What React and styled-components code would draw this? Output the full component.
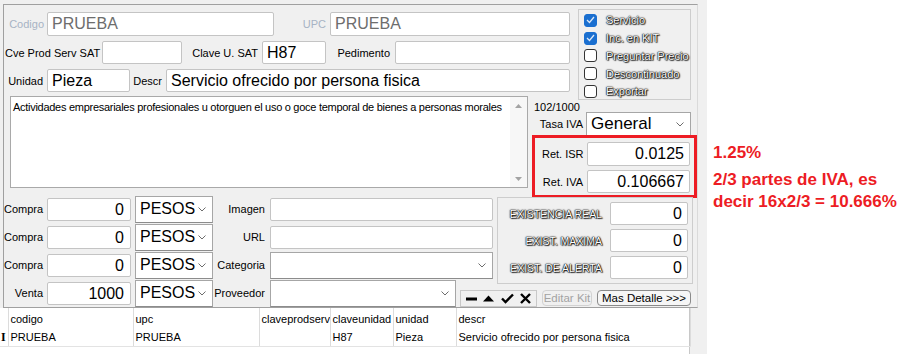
import React from 'react';
import styled, { createGlobalStyle } from 'styled-components';

const GlobalStyle = createGlobalStyle`
  html, body { margin: 0; padding: 0; background: #fff; }
  body {
    font-family: "Liberation Sans", Arial, sans-serif;
    font-size: 11px;
    color: #000;
  }
  * { box-sizing: border-box; }
`;

const Page = styled.div`
  display: flex;
  width: 910px;
  height: 354px;
  overflow: hidden;
`;

const Window = styled.div`
  width: 707px;
  height: 354px;
  background: #f0f0f0;
  padding-top: 4px;
  display: flex;
  flex-direction: column;
`;

const Frame = styled.div`
  margin-left: 3px;
  width: 695px;
  height: 304px;
  border: 1px solid #a0a0a0;
  border-right-color: #dadada;
  display: flex;
  flex-direction: column;
`;

const TopRow = styled.div`
  display: flex;
  align-items: flex-start;
`;

const FieldsCol = styled.div`
  margin-top: 7px;
  display: flex;
  flex-direction: column;
  gap: 5px;
`;

const FormRow = styled.div`
  display: flex;
  align-items: center;
  height: ${p => p.$h}px;
`;

const Label = styled.div`
  flex: none;
  width: ${p => p.$w}px;
  text-align: ${p => p.$align || 'right'};
  padding-right: ${p => p.$pr ?? 4}px;
  padding-left: ${p => p.$pl ?? 0}px;
  color: ${p => (p.$muted ? '#a7b3c4' : '#000')};
  white-space: nowrap;
  align-self: center;
  grid-column: ${p => p.$gc || 'auto'};
  grid-row: ${p => p.$gr || 'auto'};
`;

const TextBox = styled.div`
  flex: none;
  width: ${p => p.$w}px;
  height: ${p => p.$h || 23}px;
  background: #fff;
  border: 1px solid #c4c4c4;
  border-radius: 2px;
  font-size: ${p => p.$size || 16}px;
  line-height: ${p => (p.$h || 23) - 2}px;
  color: ${p => (p.$muted ? '#6d6d6d' : '#000')};
  text-align: ${p => p.$align || 'left'};
  padding: 0 ${p => p.$pr ?? 4}px 0 4px;
  white-space: nowrap;
  overflow: hidden;
  align-self: center;
  grid-column: ${p => p.$gc || 'auto'};
  grid-row: ${p => p.$gr || 'auto'};
`;

const SelectBox = styled.div`
  flex: none;
  width: ${p => p.$w}px;
  height: ${p => p.$h || 27}px;
  margin-left: ${p => p.$ml || 0}px;
  background: #fff;
  border: 1px solid #a6a6a6;
  border-bottom-color: #8c8c8c;
  display: flex;
  align-items: center;
  justify-content: space-between;
  padding: 0 6px 0 4px;
  font-size: ${p => p.$size || 16}px;
  align-self: center;
  grid-column: ${p => p.$gc || 'auto'};
  grid-row: ${p => p.$gr || 'auto'};
`;

const CheckGroup = styled.div`
  margin-top: 4px;
  margin-left: 8px;
  width: 113px;
  height: 91px;
  border: 1px solid #cdcdcd;
  padding: 1.5px 0 0 5px;
`;

const CheckItem = styled.div`
  display: flex;
  align-items: center;
  height: 17.75px;
  gap: 9px;
`;

const Box = styled.div`
  width: 13px;
  height: 13px;
  border-radius: 3px;
  border: 1px solid ${p => (p.$on ? '#1a6fd0' : '#333')};
  background: ${p => (p.$on ? '#1a6fd0' : '#fff')};
  display: flex;
  align-items: center;
  justify-content: center;
`;

const Embossed = styled.span`
  color: #fff;
  font-size: ${p => p.$size || 11}px;
  white-space: nowrap;
  text-shadow: 0 0 1px #000, 0 0 1px #000, 0 0 2px #000, 1px 1px 1px #333;
`;

const MidRow = styled.div`
  display: flex;
  align-items: flex-start;
  margin-top: -4px;
  padding-left: 6px;
`;

const Memo = styled.div`
  width: 518px;
  height: 92px;
  background: #fff;
  border: 1px solid #a9a9a9;
  display: flex;
`;

const MemoText = styled.div`
  flex: 1;
  padding: 3px 2px;
  line-height: 14px;
  letter-spacing: -0.28px;
  white-space: nowrap;
  overflow: hidden;
`;

const ScrollBar = styled.div`
  width: 17px;
  background: #f7f7f7;
  display: flex;
  flex-direction: column;
  justify-content: space-between;
  align-items: center;
  padding: 7px 0 6px;
`;

const IvaBlock = styled.div`
  margin-left: 4px;
  width: 165px;
  display: flex;
  flex-direction: column;
`;

const Counter = styled.div`
  height: 16px;
  padding: 5px 0 0 2px;
  line-height: 12px;
`;

const RedBox = styled.div`
  margin-top: -1px;
  height: 63px;
  border: 3px solid #ed1c24;
  padding: 4px 0 0 7px;
  display: flex;
  flex-direction: column;
  gap: 4px;
`;

const BottomGrid = styled.div`
  margin-top: -3px;
  display: grid;
  grid-template-columns: 43px 84px 82px 57px 223px 4px 196px;
  grid-template-rows: repeat(4, 28px);
`;

const StockGroup = styled.div`
  grid-column: 7;
  grid-row: 1 / span 3;
  align-self: start;
  margin-top: 2px;
  height: 87px;
  border: 1px solid #cdcdcd;
  padding: 4px 4px 0 0;
  display: flex;
  flex-direction: column;
  gap: 4px;
`;

const StockRow = styled.div`
  display: flex;
  justify-content: flex-end;
  align-items: center;
  height: 23px;
  gap: 8px;
`;

const LastRow = styled.div`
  grid-column: 5 / span 3;
  grid-row: 4;
  display: flex;
  align-items: flex-end;
`;

const Toolbar = styled.div`
  margin-left: 4px;
  width: 77px;
  height: 17px;
  border: 1px solid #c8c8c8;
  display: flex;
  align-items: center;
  justify-content: space-around;
  padding: 0 2px;
`;

const Button = styled.div`
  margin-left: 5px;
  margin-bottom: 1px;
  width: ${p => p.$w}px;
  height: 16px;
  border: 1px solid ${p => (p.$disabled ? '#d2d2d2' : '#8a8a8a')};
  border-radius: 4px;
  background: ${p => (p.$disabled ? '#f0f0f0' : '#f6f6f6')};
  color: ${p => (p.$disabled ? '#a3a3a3' : '#000')};
  font-size: 11.5px;
  line-height: 14px;
  text-align: center;
  white-space: nowrap;
`;

const DataGrid = styled.div`
  width: 690px;
  flex: 1;
  background: #fff;
  border-right: 1px solid #c8c8c8;
`;

const Table = styled.table`
  border-collapse: collapse;
  table-layout: fixed;
  width: 690px;
`;

const Cell = styled.td`
  padding: 0 2px;
  height: ${p => p.$h}px;
  white-space: nowrap;
  overflow: hidden;
  border-right: 1px solid #dcdcdc;
  border-bottom: ${p => (p.$last ? '1px solid #e3e3e3' : 'none')};
  font-size: 11px;
  vertical-align: middle;
`;

const Cursor = styled.span`
  font-family: "Liberation Serif", serif;
  font-weight: bold;
  font-size: 12px;
  margin-left: -1px;
`;

const Notes = styled.div`
  flex: 1;
  background: #fff;
  padding: 142px 0 0 6px;
  color: #ed1c24;
  font-weight: bold;
  font-size: 17px;
  line-height: 22px;
`;

const NoteLine = styled.div`
  white-space: nowrap;
  margin-top: ${p => p.$mt || 0}px;
`;

const Chevron = () => (
  <svg width="8" height="5" viewBox="0 0 8 5">
    <polyline points="0.5,0.5 4,4 7.5,0.5" fill="none" stroke="#6d6d6d" strokeWidth="1" />
  </svg>
);

const Select = ({ children, ...rest }) => (
  <SelectBox {...rest}>
    <span>{children}</span>
    <Chevron />
  </SelectBox>
);

const Tick = () => (
  <svg width="9" height="8" viewBox="0 0 9 8">
    <polyline points="1,4 3.5,6.5 8,1" fill="none" stroke="#dce9f8" strokeWidth="1.3" />
  </svg>
);

const Arrow = ({ down }) => (
  <svg width="7" height="4" viewBox="0 0 7 4">
    <polygon points={down ? '0,0 7,0 3.5,4' : '0,4 7,4 3.5,0'} fill="#a3a3a3" />
  </svg>
);

const checks = [
  ['Servicio', true],
  ['Inc. en KIT', true],
  ['Preguntar Precio', false],
  ['Descontinuado', false],
  ['Exportar', false],
];

const prices = [
  ['Compra', '0', 'Imagen'],
  ['Compra', '0', 'URL'],
  ['Compra', '0', 'Categoria'],
  ['Venta', '1000', 'Proveedor'],
];

const stock = ['EXISTENCIA REAL', 'EXIST. MAXIMA', 'EXIST. DE ALERTA'];

const cols = [8, 125, 126, 71, 63, 63, 234];
const header = ['', 'codigo', 'upc', 'claveprodserv', 'claveunidad', 'unidad', 'descr'];
const row = ['', 'PRUEBA', 'PRUEBA', '', 'H87', 'Pieza', 'Servicio ofrecido por persona fisica'];

export default function App() {
  return (
    <Page>
      <GlobalStyle />
      <Window>
        <Frame>
          <TopRow>
            <FieldsCol>
              <FormRow $h={24}>
                <Label $w={43} $pr={3} $muted>Codigo</Label>
                <TextBox $w={227} $h={24} $muted>PRUEBA</TextBox>
                <Label $w={56} $muted>UPC</Label>
                <TextBox $w={240} $h={24} $muted>PRUEBA</TextBox>
              </FormRow>
              <FormRow $h={23}>
                <Label $w={98} $align="left" $pl={1} $pr={0}>Cve Prod Serv SAT</Label>
                <TextBox $w={80} />
                <Label $w={80}>Clave U. SAT</Label>
                <TextBox $w={64}>H87</TextBox>
                <Label $w={69} $pr={5}>Pedimento</Label>
                <TextBox $w={175} />
              </FormRow>
              <FormRow $h={23}>
                <Label $w={43}>Unidad</Label>
                <TextBox $w={83}>Pieza</TextBox>
                <Label $w={36}>Descr</Label>
                <TextBox $w={404}>Servicio ofrecido por persona fisica</TextBox>
              </FormRow>
            </FieldsCol>
            <CheckGroup>
              {checks.map(([text, on]) => (
                <CheckItem key={text}>
                  <Box $on={on}>{on && <Tick />}</Box>
                  <Embossed>{text}</Embossed>
                </CheckItem>
              ))}
            </CheckGroup>
          </TopRow>

          <MidRow>
            <Memo>
              <MemoText>
                Actividades empresariales profesionales u otorguen el uso o goce temporal de bienes a personas morales
              </MemoText>
              <ScrollBar>
                <Arrow />
                <Arrow down />
              </ScrollBar>
            </Memo>
            <IvaBlock>
              <Counter>102/1000</Counter>
              <FormRow $h={24}>
                <Label $w={54} $pr={3}>Tasa IVA</Label>
                <Select $w={105} $h={24} $size={17}>General</Select>
              </FormRow>
              <RedBox>
                <FormRow $h={24}>
                  <Label $w={45}>Ret. ISR</Label>
                  <TextBox $w={103} $h={24} $align="right" $pr={5}>0.0125</TextBox>
                </FormRow>
                <FormRow $h={23}>
                  <Label $w={45}>Ret. IVA</Label>
                  <TextBox $w={103} $align="right" $pr={5}>0.106667</TextBox>
                </FormRow>
              </RedBox>
            </IvaBlock>
          </MidRow>

          <BottomGrid>
            {prices.map(([name, value, extra], i) => {
              const r = i + 1;
              return (
                <React.Fragment key={i}>
                  <Label $w={43} $gc={1} $gr={r}>{name}</Label>
                  <TextBox $w={84} $gc={2} $gr={r} $align="right" $pr={6}>{value}</TextBox>
                  <Select $w={78} $ml={4} $gc={3} $gr={r}>PESOS</Select>
                  <Label $w={57} $pr={5} $gc={4} $gr={r}>{extra}</Label>
                  {i < 2 && <TextBox $w={223} $gc={5} $gr={r} />}
                  {i === 2 && <Select $w={223} $gc={5} $gr={r} />}
                </React.Fragment>
              );
            })}
            <LastRow>
              <Select $w={186} />
              <Toolbar>
                <svg width="11" height="4" viewBox="0 0 11 4"><rect width="11" height="3" y="0.5" fill="#000" /></svg>
                <svg width="11" height="7" viewBox="0 0 11 7"><polygon points="0,6.5 11,6.5 5.5,0.5" fill="#000" /></svg>
                <svg width="13" height="11" viewBox="0 0 13 11"><polyline points="1,5.5 4.5,9 12,1.5" fill="none" stroke="#000" strokeWidth="2.4" /></svg>
                <svg width="11" height="11" viewBox="0 0 11 11"><path d="M1 1 L10 10 M10 1 L1 10" stroke="#000" strokeWidth="2.4" /></svg>
              </Toolbar>
              <Button $w={50} $disabled>Editar Kit</Button>
              <Button $w={94}>Mas Detalle &gt;&gt;&gt;</Button>
            </LastRow>
            <StockGroup>
              {stock.map(s => (
                <StockRow key={s}>
                  <Embossed $size={10.5}>{s}</Embossed>
                  <TextBox $w={78} $align="right" $pr={5}>0</TextBox>
                </StockRow>
              ))}
            </StockGroup>
          </BottomGrid>
        </Frame>

        <DataGrid>
          <Table>
            <colgroup>
              {cols.map((w, i) => <col key={i} style={{ width: w }} />)}
            </colgroup>
            <tbody>
              <tr>
                {header.map((h, i) => <Cell key={i} $h={21}>{h}</Cell>)}
              </tr>
              <tr>
                {row.map((v, i) => (
                  <Cell key={i} $h={17} $last>
                    {i === 0 ? <Cursor>I</Cursor> : v}
                  </Cell>
                ))}
              </tr>
            </tbody>
          </Table>
        </DataGrid>
      </Window>

      <Notes>
        <NoteLine>1.25%</NoteLine>
        <NoteLine $mt={5}>2/3 partes de IVA, es</NoteLine>
        <NoteLine>decir 16x2/3 = 10.666%</NoteLine>
      </Notes>
    </Page>
  );
}
